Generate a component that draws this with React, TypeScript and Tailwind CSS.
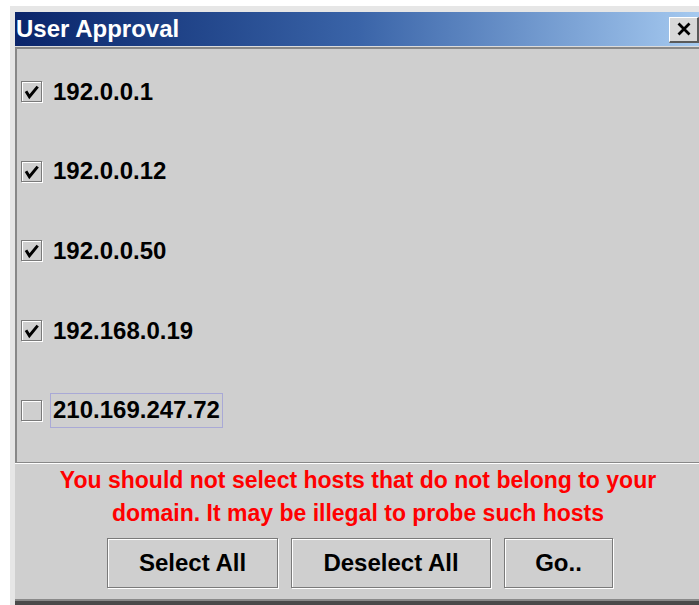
import React from "react";

const hosts = [
  { ip: "192.0.0.1", checked: true },
  { ip: "192.0.0.12", checked: true },
  { ip: "192.0.0.50", checked: true },
  { ip: "192.168.0.19", checked: true },
  { ip: "210.169.247.72", checked: false, focused: true },
];

function CheckBox({ checked }: { checked: boolean }) {
  return (
    <div className="relative w-[21px] h-[21px] shrink-0 border border-[#7a7a7a] bg-[#cfcfcf] shadow-[inset_1px_1px_0_#ffffff,1px_1px_0_#ffffff]">
      {checked && (
        <svg viewBox="0 0 20 20" className="absolute left-[-1px] top-[-1px] w-[21px] h-[21px]">
          <path d="M5.5 11 L8 15 L15 6.5" fill="none" stroke="#000" strokeWidth="2.8" strokeLinecap="square" strokeLinejoin="miter" />
        </svg>
      )}
    </div>
  );
}

function MetalButton({ label, width }: { label: string; width: string }) {
  return (
    <button
      className={`${width} h-[50px] border border-[#7a7a7a] bg-[#cfcfcf] shadow-[inset_1px_1px_0_#ffffff,1px_1px_0_#ffffff] text-[24px] font-bold text-black leading-none`}
    >
      {label}
    </button>
  );
}

export default function App() {
  return (
    <div
      className="w-[699px] h-[605px] overflow-hidden bg-white pl-[10px] pt-[6px]"
      style={{ fontFamily: '"Liberation Sans", Arial, sans-serif' }}
    >
      <div className="w-[696px] h-[599px] bg-[#e6e6e6] pl-[5px] pt-[6px] pr-[5px] flex flex-col">
        {/* title bar */}
        <div className="h-[34px] flex items-center justify-between bg-gradient-to-r from-[#0a246a] via-[#3a64a8] to-[#a6caf0] shrink-0">
          <span className="pl-[1px] text-white font-bold text-[24px] leading-none">User Approval</span>
          <div className="mr-[2px] mt-[1px] w-[30px] h-[26px] bg-[#d8d8d8] border-t border-l border-white border-r-2 border-b-2 border-r-[#5a5a5a] border-b-[#5a5a5a] flex items-center justify-center">
            <svg viewBox="0 0 16 16" className="w-[16px] h-[16px]">
              <path d="M2.5 2.5 L13.5 13.5 M13.5 2.5 L2.5 13.5" stroke="#000" strokeWidth="2.8" />
            </svg>
          </div>
        </div>
        <div className="h-[1px] bg-[#dcdcdc] shrink-0" />

        <div className="flex-1 bg-[#cfcfcf] flex flex-col">
          {/* host list */}
          <div className="h-[416px] shrink-0 border-t-2 border-l-2 border-b border-[#888888] shadow-[0_1px_0_#ffffff] pt-[3px] pl-[4px] flex flex-col">
            {hosts.map((h) => (
              <div key={h.ip} className="h-[79.6px] shrink-0 flex items-center">
                <CheckBox checked={h.checked} />
                <div
                  className={`ml-[8px] h-[35px] px-[2px] flex items-center border ${
                    h.focused ? "border-[#a9a9d6]" : "border-transparent"
                  }`}
                >
                  <span className="text-[24px] font-bold text-black leading-none">{h.ip}</span>
                </div>
              </div>
            ))}
          </div>

          {/* warning */}
          <div className="mt-[1px] text-center text-[#ff0000] font-bold text-[23px] leading-[33px]">
            <div>You should not select hosts that do not belong to your</div>
            <div>domain. It may be illegal to probe such hosts</div>
          </div>

          {/* actions */}
          <div className="mt-[8px] flex justify-center gap-[13px] pl-[4px]">
            <MetalButton label="Select All" width="w-[171px]" />
            <MetalButton label="Deselect All" width="w-[200px]" />
            <MetalButton label="Go.." width="w-[109px]" />
          </div>
          <div className="flex-1" />
        </div>
        <div className="h-[6px] shrink-0 bg-[#4a4a4a] border-t-2 border-[#8a8a8a]" />
      </div>
    </div>
  );
}
